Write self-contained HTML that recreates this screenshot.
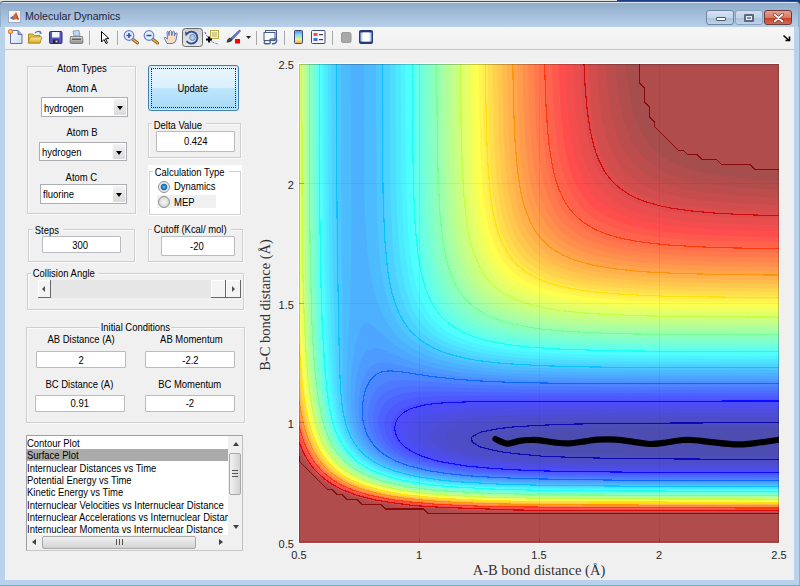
<!DOCTYPE html>
<html><head><meta charset="utf-8">
<style>
*{box-sizing:border-box;margin:0;padding:0}
html,body{width:800px;height:586px;overflow:hidden;background:#F0F0F0;font-family:"Liberation Sans",sans-serif;}
.a{position:absolute}
.t{position:absolute;font-size:9.6px;color:#000;white-space:nowrap;line-height:12px}
.fr{position:absolute;border:1px solid #CFCFCF;box-shadow:inset 1px 1px 0 #FAFAFA,1px 1px 0 #FAFAFA}
.lab{position:absolute;font-size:9.6px;background:#F0F0F0;padding:0 2px;white-space:nowrap;line-height:12px;color:#000}
.ed{position:absolute;background:#fff;border:1px solid #B9BBC1;border-radius:1px;font-size:9.6px;text-align:center;line-height:15px;color:#000}
.dd{position:absolute;background:#fff;border:1px solid #ABADB3;font-size:9.6px;line-height:17px;padding-left:3px}
.dd .btn{position:absolute;right:1px;top:1px;width:12px;bottom:1px;background:linear-gradient(#F2F2F2,#DADADA);}
.dd .btn:after{content:"";position:absolute;left:2.5px;top:7px;border-left:3.5px solid transparent;border-right:3.5px solid transparent;border-top:4px solid #000}
.sep{position:absolute;top:31px;width:1px;height:14px;background:#C5C5C5;box-shadow:1px 0 0 #FFF}
</style></head><body>
<!-- desktop/frame -->
<div class="a" style="left:0;top:0;width:800px;height:586px;background:#B9D1EA"></div>
<div class="a" style="left:0;top:0;width:617px;height:1px;background:#E2E2E2"></div>
<div class="a" style="left:617px;top:0;width:183px;height:1px;background:#1B3F8A"></div>
<div class="a" style="left:790px;top:0;width:10px;height:10px;background:#0F3C88"></div>
<div class="a" style="left:0;top:1px;width:800px;height:26px;background:#8FACCB;border-radius:4px 4px 0 0;border-top:1px solid #4C4C4C;"></div>
<div class="a" style="left:1px;top:2px;width:797px;height:25px;border-radius:3px 3px 0 0;background:linear-gradient(#DCE6F0 0px,#DCE6F0 1px,#8FACCB 1px,#A2BCD8 12px,#B8D0EA 25px)"></div>
<div class="a" style="left:799px;top:10px;width:1px;height:576px;background:#4FCFF0"></div>
<div class="a" style="left:0;top:585px;width:800px;height:1px;background:#2EC8EC"></div>
<!-- title -->
<div class="a" style="left:8px;top:10px;width:13px;height:13px;background:#F4F4F4;border:1px solid #9BB0C8">
<svg width="11" height="11" viewBox="0 0 11 11" style="position:absolute;left:0;top:0"><path d="M1 7 L4 5 L7 1 L10 9 L7 8 L5 9 Z" fill="#E8632A"/><path d="M1 7 L4 5 L5 9 Z" fill="#3A7BC8"/><path d="M7 1 L10 9 L8 8 Z" fill="#C23A1A"/></svg>
</div>
<div class="t" style="left:25px;top:9px;font-size:10.6px;line-height:14px;color:#1E1E3C">Molecular Dynamics</div>
<!-- caption buttons -->
<div class="a" style="left:706px;top:10px;width:28px;height:15px;border:1px solid #6F86A3;border-radius:3px;background:linear-gradient(#D6E3F2,#C2D5EA 50%,#A9C1DD 51%,#BCD2EA)"><div class="a" style="left:9px;top:6px;width:10px;height:4px;background:#fff;border:1px solid #4A5A70;border-radius:1px"></div></div>
<div class="a" style="left:735px;top:10px;width:28px;height:15px;border:1px solid #8CA2BC;border-radius:3px;background:linear-gradient(#D0DFF0,#C0D4EA 50%,#ADC5E0 51%,#BCD2EA)"><div class="a" style="left:8px;top:3px;width:10px;height:8px;background:#7A8FB0;border:2px solid #5E6A78;border-radius:1px;box-shadow:inset 0 0 0 1px #E8ECF2"></div></div>
<div class="a" style="left:764px;top:10px;width:28px;height:15px;border:1px solid #6E3A3A;border-radius:3px;background:linear-gradient(#E8A090,#D97A62 50%,#C23E22 51%,#D46A50)"><svg class="a" style="left:8px;top:2px" width="11" height="10" viewBox="0 0 11 10"><path d="M1.5 1.5 L9.5 8.5 M9.5 1.5 L1.5 8.5" stroke="#6A4040" stroke-width="3.2" stroke-linecap="round"/><path d="M1.5 1.5 L9.5 8.5 M9.5 1.5 L1.5 8.5" stroke="#F4F4F4" stroke-width="1.8" stroke-linecap="round"/></svg></div>
<!-- toolbar -->
<div class="a" style="left:5px;top:27px;width:789px;height:22px;background:linear-gradient(#F6F6F6,#F0F0F0)"></div>
<div class="a" style="left:5px;top:49px;width:789px;height:1px;background:#C6C6C6"></div>
<div class="a" style="left:5px;top:50px;width:789px;height:530px;background:#F0F0F0"></div>

<svg class="a" style="left:0;top:0" width="800" height="50" viewBox="0 0 800 50">
<defs>
<linearGradient id="gpage" x1="0" y1="0" x2="1" y2="1"><stop offset="0" stop-color="#FFFFFF"/><stop offset="1" stop-color="#C8DCF4"/></linearGradient>
<linearGradient id="gfold" x1="0" y1="0" x2="0" y2="1"><stop offset="0" stop-color="#FBE9A0"/><stop offset="1" stop-color="#D9A820"/></linearGradient>
<linearGradient id="gcb" x1="0" y1="0" x2="0" y2="1"><stop offset="0" stop-color="#6C7FE0"/><stop offset="0.35" stop-color="#7FE0F0"/><stop offset="0.7" stop-color="#F0F080"/><stop offset="1" stop-color="#F0A050"/></linearGradient>
<linearGradient id="gbtn" x1="0" y1="0" x2="0" y2="1"><stop offset="0" stop-color="#CFCFCF"/><stop offset="1" stop-color="#E9E9E9"/></linearGradient>
<linearGradient id="gprn" x1="0" y1="0" x2="0" y2="1"><stop offset="0" stop-color="#E0E0E0"/><stop offset="1" stop-color="#8A8A8A"/></linearGradient>
</defs>
<!-- new -->
<path d="M10.5 30.5 H18 L22 34.5 V43.5 H10.5 Z" fill="url(#gpage)" stroke="#5E6FA8" stroke-width="1"/>
<path d="M18 30.5 V34.5 H22" fill="#9AA8D8" stroke="#5E6FA8" stroke-width="1"/>
<circle cx="10.5" cy="31.5" r="2.6" fill="#F07030" opacity="0.9"/><circle cx="10.5" cy="31.5" r="1.2" fill="#FFE060"/>
<!-- open -->
<path d="M28.5 34 H33 L34.5 35.5 H40 V43 H28.5 Z" fill="#E8C040" stroke="#B08A20"/>
<path d="M28 43 L30.5 37 H42 L40 43 Z" fill="url(#gfold)" stroke="#B08A20" stroke-width="0.8"/>
<path d="M35 33 Q38 30 41 32.5" fill="none" stroke="#4A78B8" stroke-width="1.3"/><path d="M40 31 L42 33.5 L39.5 34 Z" fill="#4A78B8"/>
<!-- save -->
<rect x="49.5" y="31.5" width="12.5" height="12" rx="1" fill="#5656B8" stroke="#2E2E80"/>
<rect x="52" y="32" width="7.5" height="5.5" fill="#F4F4FF"/>
<rect x="53" y="39.5" width="5.5" height="4" fill="#202040"/><rect x="55.5" y="40.5" width="2" height="2" fill="#D0D0D0"/>
<!-- print -->
<path d="M73 31 L79 30.5 L80 36 L74 36 Z" fill="#B8D8F8" stroke="#8090A0" stroke-width="0.8"/>
<path d="M70.5 36.5 H82.5 L83 42 Q83 43.5 81.5 43.5 H71.5 Q70 43.5 70 42 Z" fill="url(#gprn)" stroke="#707070" stroke-width="0.8"/>
<rect x="72" y="38.5" width="9" height="1.5" fill="#606060"/>
<!-- separators -->
<rect x="89" y="31" width="1" height="14" fill="#A8A8A8"/>
<rect x="117" y="31" width="1" height="14" fill="#A8A8A8"/>
<!-- pointer -->
<path d="M101.5 31.5 V42 L104 39.5 L106 43.5 L107.5 42.8 L105.5 38.8 L108.8 38.5 Z" fill="#FFFFFF" stroke="#000" stroke-width="1" stroke-linejoin="round"/>
<!-- zoom in -->
<line x1="132.5" y1="39" x2="137.5" y2="43" stroke="#7A5A20" stroke-width="3" stroke-linecap="round"/>
<line x1="132.5" y1="39" x2="137.5" y2="43" stroke="#F0B050" stroke-width="1.6" stroke-linecap="round"/>
<circle cx="129" cy="35.5" r="4.8" fill="#E4F0FC" stroke="#6A80C8" stroke-width="1.2"/>
<path d="M126.5 35.5 H131.5 M129 33 V38" stroke="#3050B0" stroke-width="1.6"/>
<!-- zoom out -->
<line x1="152.5" y1="39" x2="157.5" y2="43" stroke="#7A5A20" stroke-width="3" stroke-linecap="round"/>
<line x1="152.5" y1="39" x2="157.5" y2="43" stroke="#F0B050" stroke-width="1.6" stroke-linecap="round"/>
<circle cx="149" cy="35.5" r="4.8" fill="#E4F0FC" stroke="#6A80C8" stroke-width="1.2"/>
<path d="M146.5 35.5 H151.5" stroke="#3050B0" stroke-width="1.6"/>
<!-- hand -->
<path d="M167 43.5 L164.5 38.5 Q164 37 165.5 37.5 L167.5 39 L167 32.5 Q167 31.2 168.2 31.5 L169 35.5 L169.5 31 Q170.5 30 171.3 31 L171.8 35.5 L172.8 31.5 Q173.8 30.8 174.5 31.8 L174.3 36 L175.8 33 Q177 32.5 177.2 33.8 L176 40 Q175 43.5 172 43.5 Z" fill="#F8DCC0" stroke="#5070C0" stroke-width="0.9" stroke-linejoin="round"/>
<!-- rotate pressed -->
<rect x="182.5" y="28.5" width="20" height="18" rx="3" fill="url(#gbtn)" stroke="#6A6A6A"/>
<path d="M187 33.5 A6 6 0 1 1 186.5 41" fill="none" stroke="#2A4E9A" stroke-width="1.8"/>
<path d="M185 31.5 L188.8 33.8 L185.6 36 Z" fill="#2A4E9A"/>
<ellipse cx="192.5" cy="37.5" rx="2.8" ry="3" fill="#B8C8E8" stroke="#5070B0" stroke-width="0.8"/>
<!-- data cursor -->
<rect x="210.5" y="30.5" width="8" height="8" fill="#F4F0B0" stroke="#B8B050"/>
<rect x="212" y="32" width="5" height="5" fill="#D8D090"/>
<path d="M205 32 Q207 37 210 40 Q213 43 218 44" fill="none" stroke="#5060E0" stroke-width="1" stroke-dasharray="2 1.2"/>
<path d="M206 39.5 H212 M209 36.5 V42.5" stroke="#000" stroke-width="1.8"/>
<!-- brush -->
<path d="M231 38 L239.5 30 L240.5 31 L232.5 39.5 Z" fill="#6A80D8" stroke="#3A4EA0" stroke-width="0.8"/>
<path d="M226.5 42.5 Q227 38.5 230 37.5 L232.5 39.8 Q231 43 226.5 42.5 Z" fill="#404040"/>
<rect x="235" y="39" width="5" height="4.5" fill="#FF0000"/>
<path d="M246 36 H251 L248.5 39 Z" fill="#202020"/>
<rect x="256" y="31" width="1" height="14" fill="#A8A8A8"/>
<!-- link -->
<rect x="265.5" y="30.5" width="11" height="8" fill="#F0F4FC" stroke="#4A5A88"/>
<rect x="264" y="32.5" width="11" height="8" fill="#F8FAFE" stroke="#4A5A88"/>
<path d="M265 41 Q263 43.5 266 43.8 H269 Q271 43.5 270 41 M270 41.5 Q269 39 272 39 H275 Q278 39.5 276 42.5 Q275 44 272 43.8" fill="none" stroke="#506090" stroke-width="1.4"/>
<rect x="284" y="31" width="1" height="14" fill="#A8A8A8"/>
<!-- colorbar -->
<rect x="294.5" y="30.5" width="8" height="13" rx="1" fill="url(#gcb)" stroke="#3A4A80"/>
<!-- legend -->
<rect x="311.5" y="30.5" width="13.5" height="13" rx="1" fill="#F8F8FF" stroke="#3A4A80"/>
<rect x="313.5" y="33" width="4" height="3" fill="#F05050"/><rect x="313.5" y="38" width="4" height="3" fill="#5060F0"/>
<rect x="319" y="34" width="4" height="1.2" fill="#404040"/><rect x="319" y="39" width="4" height="1.2" fill="#404040"/>
<rect x="332" y="31" width="1" height="14" fill="#A8A8A8"/>
<!-- hide tools -->
<rect x="341.5" y="32.5" width="9.5" height="10" rx="1.5" fill="#A8A8A8" stroke="#9A9A9A"/>
<!-- show tools -->
<rect x="359.5" y="30.5" width="13" height="13" rx="1" fill="#2A3A78" stroke="#2A3A78"/>
<rect x="360.5" y="32.5" width="11" height="9" fill="#B8D4F4"/>
<rect x="362.5" y="32.5" width="7" height="9" fill="#FFFFFF"/>
<!-- dock arrow -->
<path d="M783.5 35.5 L789 40.5 M785.5 40.5 H789.5 V36.5" stroke="#000" stroke-width="1.6" fill="none"/>
</svg>

<!-- left panel -->
<div class="fr" style="left:27px;top:66px;width:109px;height:148px"></div>
<div class="a" style="top:63.60px;left:53.00px;width:57.00px;height:10px;background:#F0F0F0"></div><div class="t" style="top:61.79px;font-size:11px;left:-68.50px;width:300px;text-align:center;"><span style="display:inline-block;transform:scaleX(0.86);transform-origin:center">Atom Types</span></div>
<div class="t" style="top:82.39px;font-size:11px;left:-67.90px;width:300px;text-align:center;"><span style="display:inline-block;transform:scaleX(0.86);transform-origin:center">Atom A</span></div>
<div class="dd" style="left:41px;top:97px;width:87px;height:20px"><div class="btn"></div></div><div class="t" style="top:101.99px;font-size:11px;left:43.50px;"><span style="display:inline-block;transform:scaleX(0.86);transform-origin:left">hydrogen</span></div>
<div class="t" style="top:126.19px;font-size:11px;left:-68.00px;width:300px;text-align:center;"><span style="display:inline-block;transform:scaleX(0.86);transform-origin:center">Atom B</span></div>
<div class="dd" style="left:39px;top:142px;width:88px;height:19px"><div class="btn"></div></div><div class="t" style="top:145.94px;font-size:11px;left:41.75px;"><span style="display:inline-block;transform:scaleX(0.86);transform-origin:left">hydrogen</span></div>
<div class="t" style="top:171.39px;font-size:11px;left:-68.25px;width:300px;text-align:center;"><span style="display:inline-block;transform:scaleX(0.86);transform-origin:center">Atom C</span></div>
<div class="dd" style="left:40px;top:184px;width:87px;height:20px"><div class="btn"></div></div><div class="t" style="top:187.94px;font-size:11px;left:43.25px;"><span style="display:inline-block;transform:scaleX(0.86);transform-origin:left">fluorine</span></div>
<div class="a" style="left:148px;top:65px;width:91px;height:46px;border:1px solid #3C7FB1;border-radius:3px;background:linear-gradient(#EAF6FD 0%,#D9F0FC 50%,#BEE6FD 50%,#A7D9F5 100%);box-shadow:inset 0 0 0 1px #CDEBFA"><div class="a" style="left:2px;top:2px;right:2px;bottom:2px;border:1px dotted #222"></div></div>
<div class="t" style="top:82.49px;font-size:11px;left:43.00px;width:300px;text-align:center;"><span style="display:inline-block;transform:scaleX(0.86);transform-origin:center">Update</span></div>
<div class="fr" style="left:148px;top:123px;width:93px;height:35px"></div>
<div class="t" style="top:118.69px;left:152.30px;font-size:11px"><span style="display:inline-block;transform:scaleX(0.86);transform-origin:left;background:#F0F0F0;padding:0 5px 0 2px">Delta Value</span></div>
<div class="ed" style="left:156px;top:131px;width:79px;height:21px"></div><div class="t" style="top:134.79px;font-size:11px;left:45.50px;width:300px;text-align:center;"><span style="display:inline-block;transform:scaleX(0.86);transform-origin:center">0.424</span></div>
<div class="a" style="left:148px;top:165px;width:94px;height:51px;background:#FFFFFF"></div>
<div class="a" style="left:149px;top:171px;width:92px;height:44px;border:1px solid #D0D0D0"></div>
<div class="t" style="top:165.59px;left:153.00px;font-size:11px"><span style="display:inline-block;transform:scaleX(0.86);transform-origin:left;background:#FFFFFF;padding:0 5px 0 2px">Calculation Type</span></div>
<div class="a" style="left:157px;top:195px;width:59px;height:13px;background:#F0F0F0"></div>
<div class="a" style="left:158px;top:181px;width:12px;height:12px;border-radius:50%;border:1px solid #8E8F8F;background:radial-gradient(circle at 50% 50%,#5FC0F0 0,#1F6FB0 2.5px,#2B6FA0 3.2px,#DDE 3.6px,#F4F4F4 5px)"></div>
<div class="a" style="left:158px;top:196px;width:12px;height:12px;border-radius:50%;border:1px solid #8E8F8F;background:radial-gradient(circle at 50% 50%,#F8F8F8 0,#E6E6E6 3px,#D6D6D6 5px)"></div>
<div class="t" style="top:180.09px;font-size:11px;left:173.70px;"><span style="display:inline-block;transform:scaleX(0.86);transform-origin:left">Dynamics</span></div>
<div class="t" style="top:195.89px;font-size:11px;left:173.70px;"><span style="display:inline-block;transform:scaleX(0.86);transform-origin:left">MEP</span></div>
<div class="fr" style="left:28px;top:229px;width:107px;height:33px"></div>
<div class="t" style="top:223.59px;left:32.50px;font-size:11px"><span style="display:inline-block;transform:scaleX(0.86);transform-origin:left;background:#F0F0F0;padding:0 5px 0 2px">Steps</span></div>
<div class="ed" style="left:42px;top:236px;width:79px;height:17px"></div><div class="t" style="top:238.94px;font-size:11px;left:-69.50px;width:300px;text-align:center;"><span style="display:inline-block;transform:scaleX(0.86);transform-origin:center">300</span></div>
<div class="fr" style="left:148px;top:229px;width:95px;height:33px"></div>
<div class="t" style="top:223.19px;left:152.25px;font-size:11px"><span style="display:inline-block;transform:scaleX(0.86);transform-origin:left;background:#F0F0F0;padding:0 5px 0 2px">Cutoff (Kcal/ mol)</span></div>
<div class="ed" style="left:161px;top:236px;width:74px;height:20px"></div><div class="t" style="top:240.39px;font-size:11px;left:47.00px;width:300px;text-align:center;"><span style="display:inline-block;transform:scaleX(0.86);transform-origin:center">-20</span></div>
<div class="fr" style="left:27px;top:273px;width:217px;height:37px"></div>
<div class="t" style="top:267.19px;left:31.20px;font-size:11px"><span style="display:inline-block;transform:scaleX(0.86);transform-origin:left;background:#F0F0F0;padding:0 5px 0 2px">Collision Angle</span></div>
<div class="a" style="left:38px;top:280px;width:203px;height:18px;background:#E6E6E6"></div>
<div class="a" style="left:38px;top:280px;width:13px;height:18px;background:#F4F4F4;border-right:1px solid #696969;border-bottom:1px solid #696969;box-shadow:inset 1px 1px 0 #FFF"></div>
<div class="a" style="left:211px;top:280px;width:15px;height:18px;background:#F4F4F4;border-right:1px solid #696969;border-bottom:1px solid #696969;box-shadow:inset 1px 1px 0 #FFF"></div>
<div class="a" style="left:226px;top:280px;width:15px;height:18px;background:#F4F4F4;border-right:1px solid #696969;border-bottom:1px solid #696969;box-shadow:inset 1px 1px 0 #FFF"></div>
<div class="a" style="left:42px;top:286px;border-top:3px solid transparent;border-bottom:3px solid transparent;border-right:3px solid #505050"></div>
<div class="a" style="left:232px;top:286px;border-top:3px solid transparent;border-bottom:3px solid transparent;border-left:3px solid #505050"></div>
<div class="fr" style="left:26px;top:327px;width:219px;height:96px"></div>
<div class="a" style="top:322.75px;left:99.00px;width:72.00px;height:10px;background:#F0F0F0"></div><div class="t" style="top:320.94px;font-size:11px;left:-15.00px;width:300px;text-align:center;"><span style="display:inline-block;transform:scaleX(0.86);transform-origin:center">Initial Conditions</span></div>
<div class="t" style="top:333.39px;font-size:11px;left:-69.10px;width:300px;text-align:center;"><span style="display:inline-block;transform:scaleX(0.86);transform-origin:center">AB Distance (A)</span></div>
<div class="ed" style="left:36px;top:351px;width:90px;height:17px"></div><div class="t" style="top:353.94px;font-size:11px;left:-69.00px;width:300px;text-align:center;"><span style="display:inline-block;transform:scaleX(0.86);transform-origin:center">2</span></div>
<div class="t" style="top:333.39px;font-size:11px;left:41.60px;width:300px;text-align:center;"><span style="display:inline-block;transform:scaleX(0.86);transform-origin:center">AB Momentum</span></div>
<div class="ed" style="left:145px;top:351px;width:90px;height:17px"></div><div class="t" style="top:353.94px;font-size:11px;left:40.00px;width:300px;text-align:center;"><span style="display:inline-block;transform:scaleX(0.86);transform-origin:center">-2.2</span></div>
<div class="t" style="top:377.89px;font-size:11px;left:-70.15px;width:300px;text-align:center;"><span style="display:inline-block;transform:scaleX(0.86);transform-origin:center">BC Distance (A)</span></div>
<div class="ed" style="left:35px;top:395px;width:90px;height:17px"></div><div class="t" style="top:396.94px;font-size:11px;left:-70.50px;width:300px;text-align:center;"><span style="display:inline-block;transform:scaleX(0.86);transform-origin:center">0.91</span></div>
<div class="t" style="top:377.89px;font-size:11px;left:39.75px;width:300px;text-align:center;"><span style="display:inline-block;transform:scaleX(0.86);transform-origin:center">BC Momentum</span></div>
<div class="ed" style="left:145px;top:395px;width:90px;height:17px"></div><div class="t" style="top:396.94px;font-size:11px;left:40.00px;width:300px;text-align:center;"><span style="display:inline-block;transform:scaleX(0.86);transform-origin:center">-2</span></div>
<div class="a" style="left:26px;top:435px;width:217px;height:116px;background:#fff;border:1px solid #A0A0A0;border-right-color:#C0C0C0;border-bottom-color:#C8C8C8"></div>
<div class="a" style="left:27px;top:449px;width:201px;height:12px;background:#ABABAB"></div>
<div class="a" style="left:27px;top:436px;width:201px;height:99px;overflow:hidden">
<div class="t" style="top:0.99px;font-size:11px;left:-0.50px;"><span style="display:inline-block;transform:scaleX(0.86);transform-origin:left">Contour Plot</span></div>
<div class="t" style="top:13.33px;font-size:11px;left:-0.50px;"><span style="display:inline-block;transform:scaleX(0.86);transform-origin:left">Surface Plot</span></div>
<div class="t" style="top:25.67px;font-size:11px;left:-0.50px;"><span style="display:inline-block;transform:scaleX(0.86);transform-origin:left">Internuclear Distances vs Time</span></div>
<div class="t" style="top:38.01px;font-size:11px;left:-0.50px;"><span style="display:inline-block;transform:scaleX(0.86);transform-origin:left">Potential Energy vs Time</span></div>
<div class="t" style="top:50.35px;font-size:11px;left:-0.50px;"><span style="display:inline-block;transform:scaleX(0.86);transform-origin:left">Kinetic Energy vs Time</span></div>
<div class="t" style="top:62.69px;font-size:11px;left:-0.50px;"><span style="display:inline-block;transform:scaleX(0.86);transform-origin:left">Internuclear Velocities vs Internuclear Distance</span></div>
<div class="t" style="top:75.03px;font-size:11px;left:-0.50px;"><span style="display:inline-block;transform:scaleX(0.86);transform-origin:left">Internuclear Accelerations vs Internuclear Distance</span></div>
<div class="t" style="top:87.37px;font-size:11px;left:-0.50px;"><span style="display:inline-block;transform:scaleX(0.86);transform-origin:left">Internuclear Momenta vs Internuclear Distance</span></div>
</div>
<div class="a" style="left:228px;top:436px;width:14px;height:99px;background:#F0F0F0"></div>
<div class="a" style="left:233px;top:442px;border-left:3px solid transparent;border-right:3px solid transparent;border-bottom:4px solid #404040"></div>
<div class="a" style="left:233px;top:525px;border-left:3px solid transparent;border-right:3px solid transparent;border-top:4px solid #404040"></div>
<div class="a" style="left:229px;top:453px;width:12px;height:42px;border:1px solid #A9A9A9;border-radius:2px;background:linear-gradient(90deg,#F2F2F2,#E2E2E2 50%,#D2D2D2)"></div>
<div class="a" style="left:232px;top:470px;width:6px;height:1px;background:#555;box-shadow:0 3px 0 #555,0 6px 0 #555"></div>
<div class="a" style="left:27px;top:535px;width:215px;height:15px;background:#F0F0F0"></div>
<div class="a" style="left:32px;top:539px;border-top:3px solid transparent;border-bottom:3px solid transparent;border-right:4px solid #404040"></div>
<div class="a" style="left:219px;top:539px;border-top:3px solid transparent;border-bottom:3px solid transparent;border-left:4px solid #404040"></div>
<div class="a" style="left:42px;top:536px;width:154px;height:13px;border:1px solid #A9A9A9;border-radius:2px;background:linear-gradient(#F2F2F2,#E2E2E2 50%,#D2D2D2)"></div>
<div class="a" style="left:116px;top:539px;width:1px;height:6px;background:#555;box-shadow:3px 0 0 #555,6px 0 0 #555"></div>
<!-- plot -->
<svg class="a" style="left:0;top:0" width="800" height="586" viewBox="0 0 800 586">
<defs><clipPath id="pc"><rect x="299" y="64" width="480" height="478.5"/></clipPath></defs>
<rect x="298" y="63" width="482" height="481" fill="#FFFFFF"/>
<g clip-path="url(#pc)">
<rect x="299" y="64" width="480" height="478.5" fill="#4D4DB1"/>
<path fill="#4D4DBC" d="M299 542.5 779 542.5 779 456.3 644.6 455.4 601.4 454.4 563 452.9 541.5 451.6 515 447.6 510.4 446.8 500.3 442 503.5 437.2 515 434.3 525.3 432.4 558.2 430.1 591.8 428.8 639.8 427.8 779 427.2 779 64 299 64 299 542.5Z"/>
<path fill="#4D4DC7" d="M299 542.5 779 542.5 779 460.1 620.6 459.2 572.6 458.1 534 456.4 495.8 452 481.4 448.5 475.5 446.8 467.8 442 467.1 437.2 474.1 432.4 491 428.4 510.2 426.1 534.2 424.6 567.8 423.3 611 422.5 779 421.8 779 64 299 64 299 542.5Z"/>
<path fill="#4D4DD2" d="M299 542.5 779 542.5 779 463.1 601.4 462.2 557 461.2 519.8 459 491.6 456.4 466.9 451.6 454 446.8 447.4 442 445.4 437.2 447.9 432.4 457.4 427.4 467 425 479 422.9 505.4 420.5 539 419 587 418.1 779 417.3 779 64 299 64 299 542.5Z"/>
<path fill="#4D4DDE" d="M299 542.5 779 542.5 779 465.8 668.6 465.5 596.6 464.8 543.8 463.3 503.9 461.2 486.2 459.1 467.3 456.4 449.1 451.6 438.6 446.8 432.6 442 430 437.2 430.6 432.4 434.7 427.7 444.8 422.9 462.2 419.1 486.2 416.6 519.8 415 572.6 414 779 413.2 779 64 299 64 299 542.5Z"/>
<path fill="#4D4DE9" d="M299 542.5 779 542.5 779 467.9 649.4 467.6 572.6 466.7 529.4 465.3 486.2 462.2 471.8 460.4 452.6 456.9 435.7 451.6 426.6 446.8 421.1 442 418.2 437.2 417.6 432.4 419.5 427.7 423.8 423.6 428.6 420.9 433.4 418.9 443 416.4 452.6 414.7 476.6 412.4 510.2 411 563 410.2 779 409.5 779 64 299 64 299 542.5Z"/>
<path fill="#4D4DF4" d="M299 542.5 779 542.5 779 470 659 469.7 582.2 468.9 524.6 467.3 499.3 465.9 486.2 464.7 467 462.5 452.6 460 437.4 456.4 424.9 451.6 416.8 446.8 411.6 442 408.6 437.2 407.4 432.4 408 427.7 410.7 422.9 414.2 419.8 419 416.8 428.4 413.3 433.4 412.2 447.8 409.9 462.2 408.6 495.8 407.3 543.8 406.6 779 406 779 64 299 64 299 542.5Z"/>
<path fill="#4D4DFF" d="M299 542.5 779 542.5 779 471.8 649.4 471.5 569.7 470.7 515 468.8 474.6 465.9 443.9 461.2 426.9 456.4 415.9 451.6 408.5 446.8 403.6 442 400.5 437.2 398.9 432.4 398.8 427.7 400.1 422.9 403.3 418.1 409.4 413.3 414.2 411.1 422 408.5 428.6 407.2 438.2 405.8 452.6 404.6 481.4 403.6 524.6 403.1 779 402.6 779 64 299 64 299 542.5Z"/>
<path fill="#4D58FF" d="M299 542.5 779 542.5 779 473.4 635 473 553.4 472 505.4 470.3 481.4 468.5 462.2 466.5 447.8 464.3 432.8 461.2 418 456.4 408.2 451.6 401.5 446.8 396.8 442 393.6 437.2 391.8 432.4 391.1 427.7 391.5 422.9 393.3 418.1 396.7 413.3 402.8 408.5 409.4 405.6 415.7 403.7 423.8 402.2 438.2 400.8 457.4 400 491 399.6 779 399.4 779 64 299 64 299 542.5Z"/>
<path fill="#4D63FF" d="M299 542.5 779 542.5 779 475 635 474.7 553.4 473.6 519.8 472.6 491 471.2 457.4 467.9 443 465.7 423.5 461.2 410.4 456.4 401.5 451.6 395 446.6 390.7 442 387.6 437.2 385.5 432.4 384.5 427.7 384.4 422.9 385.2 418.1 387.1 413.3 390.4 408.5 396.3 403.7 404.6 400.1 409.4 398.8 419 397.2 428.6 396.4 457.4 395.8 779 396.2 779 64 299 64 299 542.5Z"/>
<path fill="#4D6EFF" d="M299 542.5 779 542.5 779 476.4 635 476.1 558.2 475.3 500.6 473.3 476.6 471.7 457.4 469.8 433.4 465.9 419 462.2 403.8 456.4 395.6 451.6 389.6 446.8 385.3 442 382.2 437.2 380.1 432.4 378.8 427.7 378.3 422.9 378.5 418.1 379.5 413.3 381.3 408.5 385.4 402.6 389.6 398.9 395 396 399.8 394.3 404.6 393.2 414.2 392 433.4 391.4 553.4 393 779 393.2 779 64 299 64 299 542.5Z"/>
<path fill="#4D79FF" d="M299 542.5 779 542.5 779 477.8 625.4 477.4 543.8 476.4 495.8 474.6 471.8 472.9 450.8 470.7 428.6 466.8 414.2 463 408.6 461.2 399.8 457.3 390.2 451.6 384.6 446.8 380.4 442 377.4 437.2 375.2 432.4 373.8 427.7 372.8 418.1 374.1 408.5 375.8 403.7 380.6 396.3 385.4 392.2 390.2 389.7 395 388.1 404.6 386.6 419 386.3 486.2 388.8 543.8 389.8 779 390.2 779 64 299 64 299 542.5Z"/>
<path fill="#4D84FF" d="M299 542.5 779 542.5 779 479.1 625.4 478.7 539 477.6 485.5 475.5 462.2 473.5 439.4 470.7 416.7 465.9 404.6 461.9 392.6 456.4 385.4 451.6 380.1 446.8 376 442 371 432.9 368.3 422.9 367.7 413.3 369.1 403.7 370.5 398.9 372.7 394.2 375.8 389.4 380.6 385 385.4 382.5 390.2 381.1 395 380.3 409.4 380.2 467 384.4 524.6 386.3 606.2 387.1 779 387.2 779 64 299 64 299 542.5Z"/>
<path fill="#4D8FFF" d="M299 542.5 779 542.5 779 480.4 620.6 480 534.2 478.8 500.6 477.6 471.8 475.9 452.6 474 433.4 471.3 409.9 465.9 399.8 462.3 387.8 456.4 381 451.6 375.9 446.8 372 442 366.8 432.4 364 422.9 363 413.3 363.4 403.7 365.3 394.2 366.9 389.4 371 381.6 375.8 376.7 380.6 374 385.4 372.8 390.2 372.4 399.8 372.8 433.4 377.4 457.4 379.9 481.4 381.6 510.2 382.8 596.6 384.1 779 384.3 779 64 299 64 299 542.5Z"/>
<path fill="#4D9BFF" d="M299 542.5 779 542.5 779 481.5 620.6 481.1 534.2 480 500.6 478.8 471.8 477.2 452.6 475.5 428.6 472 414.2 468.8 399.8 464.4 392 461.2 385.4 457.5 377 451.6 372.1 446.8 368.3 442 365.4 437.2 363.1 432.4 360.2 422.9 359.3 418.1 358.6 408.5 358.9 398.9 360.3 389.4 361.4 384.1 364.8 375 366.2 372.1 371 366.2 375.8 363.4 380.6 362.4 390.2 363.1 420.5 370.2 443 374.2 467 377 500.6 379.1 539 380.4 587 381 779 381.4 779 64 299 64 299 542.5Z"/>
<path fill="#4DA6FF" d="M299 542.5 779 542.5 779 482.5 611 482.1 519.8 480.8 491 479.6 462.2 477.6 441.4 475.5 423.8 472.6 414.7 470.7 404.6 467.9 398.5 465.9 390.2 462.4 379.3 456.4 371 449.4 366.2 443.8 361.9 437.2 358 427.7 355.7 418.1 354.4 403.7 354.6 394.2 356.1 379.8 358 370.2 361.4 359.3 366.2 351.5 371 348.4 375.8 348 380.6 349.1 385.4 350.9 408.4 360.7 428.6 366.8 452.6 371.4 467 373.2 486.2 374.9 524.6 376.9 577.4 378 779 378.6 779 64 299 64 299 542.5Z"/>
<path fill="#4DB1FF" d="M299 542.5 779 542.5 779 483.6 611 483.2 519.8 481.9 481.4 480.3 462.2 478.9 433.4 475.7 419 473.1 408.4 470.7 399.8 468.1 393.6 465.9 385.4 462.2 375.5 456.4 369.7 451.6 365.2 446.8 361.6 442 358.8 437.2 356.5 432.4 353.4 422.9 351 408.5 350.4 394.2 351.8 368.1 356.6 338.6 361.4 325.5 366.2 322.3 371 324.2 384.7 336.7 396.6 346.3 404.2 351.1 413.5 355.9 425.8 360.7 438.2 364.2 452.6 367.3 467 369.5 486.2 371.5 505.4 372.9 558.2 374.7 635 375.5 779 375.7 779 64 299 64 299 542.5Z"/>
<path fill="#4DBCFF" d="M299 542.5 779 542.5 779 484.7 644.6 484.5 563 483.8 505.4 482.5 463.8 480.3 443 478.2 423.8 475.5 402.8 470.7 389.1 465.9 380.6 461.8 372.1 456.4 366.4 451.6 362.1 446.8 358.6 442 355.8 437.2 351.8 427.7 348.4 413.3 347.2 403.7 346.6 394.2 346.8 365.5 350.1 303.2 351.2 260.2 351.4 212.3 350.5 64 299 64 299 542.5ZM516.3 370.2 553.4 371.6 601.4 372.4 779 372.9 779 64 364.2 64 364.3 188.4 365.1 217.1 367.3 250.6 369.7 269.8 373.5 288.9 377.8 303.2 384.2 317.6 386.9 322.4 393.7 332 398.1 336.7 403.3 341.5 414.2 349.2 428 355.9 443 360.8 465.6 365.5 486.2 368 516.3 370.2Z"/>
<path fill="#4DC7FF" d="M299 542.5 779 542.5 779 485.7 563 484.9 505.4 483.5 462.2 481.2 443 479.4 423.8 476.7 414.2 474.9 399.8 471.3 385.4 466.1 380.6 463.8 375.7 461.2 366.2 454.1 361.4 449.4 356.6 443.2 353.1 437.2 350.8 432.4 346.4 418.1 344.8 408.5 343.4 394.2 342.6 370.2 342.5 308 341.3 183.6 340.9 64 299 64 299 542.5ZM495.1 365.5 534.2 368 582.2 369.3 654.2 369.9 779 370.1 779 64 376.1 64 376.4 178.8 377.1 212.3 378 236.3 379.9 260.2 382.4 279.3 386.8 298.5 390 308 392 312.8 397 322.4 404 332 408.5 336.7 414.1 341.5 423.8 347.9 430.1 351.1 438.2 354.4 452.6 358.8 471.8 362.6 495.1 365.5Z"/>
<path fill="#4DD2FF" d="M299 542.5 779 542.5 779 486.6 558.2 485.8 505.4 484.6 462.2 482.3 433.4 479.4 414.2 476.2 404.6 474 393 470.7 381 465.9 372.4 461.2 365.7 456.4 360.5 451.6 356.4 446.8 351.8 439.7 348.2 432.4 345 422.9 342.8 413.3 340.4 394.2 338.8 360.7 336.7 260.2 335.9 178.8 335.5 64 299 64 299 542.5ZM548.4 365.5 625.4 366.9 779 367.2 779 64 383.5 64 384.1 183.6 385 217.1 386.4 245.8 388.9 269.8 392.3 288.9 396.3 303.2 402.6 317.6 408.9 327.2 413 332 419 337.6 424.2 341.5 432.2 346.3 438.2 349.2 447.8 352.8 457.4 355.7 467 357.9 486.2 361 515 363.8 548.4 365.5Z"/>
<path fill="#4DDEFF" d="M299 542.5 779 542.5 779 487.5 639.8 487.3 558.2 486.7 500.6 485.4 462.2 483.3 431.3 480.3 404.6 475.4 388.7 470.7 377.5 465.9 369.2 461.2 362.8 456.4 357.8 451.6 353.8 446.8 350.6 442 345.8 432.4 342.5 422.9 340.3 413.3 338.7 403.7 337.1 389.4 334.9 346.3 332.6 261.1 331.8 178.8 331.4 64 299 64 299 542.5ZM516.7 360.7 553.4 362.6 601.4 363.7 779 364.4 779 64 389.8 64 390.4 178.8 391.2 212.3 392.3 236.3 394.3 260.2 397.1 279.3 400.4 293.7 405.4 308 409.4 316 413.4 322.4 417.1 327.2 421.6 332 427.2 336.7 433.4 341 443 346 456.7 351.1 471.8 354.9 491 358.1 516.7 360.7Z"/>
<path fill="#4DE9FF" d="M299 542.5 779 542.5 779 488.4 563 487.6 505.4 486.4 462.2 484.3 443 482.6 423.8 480.3 399.8 475.5 384.7 470.7 375.8 466.8 366.2 461.2 360.1 456.4 355.2 451.6 351.3 446.8 348.2 442 345.6 437.2 341.7 427.7 339 418.1 337 408.5 333.7 379.8 331.3 332 329.3 260.2 328.4 183.6 328 64 299 64 299 542.5ZM593.2 360.7 663.8 361.4 779 361.6 779 64 395.4 64 396.1 183.6 397.1 217.1 398.8 245.8 401.6 269.8 405.5 288.9 410.1 303.2 414.2 312 417.5 317.6 425.1 327.2 430.2 332 438.2 337.8 444.8 341.5 452.6 345 462.2 348.3 471.8 350.9 495.8 355.2 519.8 357.7 553.4 359.6 593.2 360.7Z"/>
<path fill="#4DF4FF" d="M299 542.5 779 542.5 779 489.3 639.8 489.1 558.2 488.5 500.6 487.2 458.3 485.1 438.2 483.1 419 480.6 395.1 475.5 381 470.7 371 466 363.4 461.2 357.5 456.4 352.8 451.6 347 443.8 343.4 437.2 339.5 427.7 336.7 418.1 334.8 408.5 332.6 394.2 331.2 379.8 328 322.4 326.5 269.8 325.6 188.4 325.2 64 299 64 299 542.5ZM540.5 355.9 577.4 357.4 620.6 358.2 779 358.7 779 64 400.5 64 401.2 174.1 402 207.6 403.5 236.3 405.8 260.2 409.1 279.3 412.9 293.7 418.8 308 424.6 317.6 428.4 322.4 433.4 327.5 438.8 332 446.2 336.7 457.4 342.1 471.8 346.8 491 350.9 515 354 540.5 355.9Z"/>
<path fill="#4DFFFF" d="M299 542.5 779 542.5 779 490.1 630.2 489.9 553.4 489.3 491 487.7 447.8 485.2 414.2 480.9 390.8 475.5 377.6 470.7 368 465.9 360.7 461.2 355 456.4 350.5 451.6 346.7 446.8 343.8 442 341.2 437.2 337.3 427.7 333.5 413.3 331.8 403.7 328.1 370.2 325.3 317.6 323.6 255.4 322.9 188.4 322.5 64 299 64 299 542.5ZM750.1 355.9 779 355.9 779 64 405.4 64 405.8 145.3 406.6 193.2 408.3 231.5 411.2 260.2 413.6 274.5 415.8 284.1 418.8 293.7 422.7 303.2 428.1 312.8 431.7 317.6 435.9 322.4 441.2 327.2 447.8 332 456.5 336.7 471.8 342.6 491 347.2 505.4 349.5 519.8 351.1 553.4 353.4 596.6 354.9 654.2 355.6 750.1 355.9Z"/>
<path fill="#58FFF4" d="M299 542.5 779 542.5 779 490.9 625.4 490.7 543.8 490 491 488.6 447.8 486 428.6 484 409.4 481.1 399.8 479 386.8 475.5 374.3 470.7 366.2 466.5 358.2 461.2 352.6 456.4 347 450 342.2 442.9 337.4 433.2 335.4 427.7 332.6 418.1 329.8 403.7 327.8 390 326.3 375 323.1 322.4 321.6 269.8 320.7 193.2 320.3 64 299 64 299 542.5ZM570 351.1 644.6 352.6 779 353 779 64 410.1 64 410.9 174.1 411.9 207.6 413.2 231.5 415.6 255.4 418.9 274.5 422.8 288.9 428.9 303.3 433.4 310.7 438.2 316.9 443 321.8 447.8 325.8 457.4 332 471.8 338.2 481.4 341.1 491 343.4 510.2 346.6 539 349.5 570 351.1Z"/>
<path fill="#63FFE9" d="M299 542.5 779 542.5 779 491.7 630.2 491.4 548.6 490.8 495.8 489.7 452.6 487.3 429 485.1 414.2 482.9 400.3 480.3 385.4 476.2 371.2 470.7 366.2 468.1 356.6 461.8 351.8 457.7 346.1 451.6 339.7 442 337.2 437.2 332.6 425 327.8 403.7 325.3 384.6 323.5 365.5 320.8 317.6 319.2 260.2 318.4 183.6 318.1 64 299 64 299 542.5ZM540 346.3 572.6 348.1 620.6 349.4 779 350.2 779 64 414.6 64 415.4 169.3 416.3 202.8 417.6 226.7 419.4 245.8 422.2 265 425.4 279.3 430.3 293.7 433.4 300.2 438.1 308 446.2 317.6 451.7 322.4 457.4 326.4 467 331.6 480.8 336.7 495.8 340.6 515 343.8 540 346.3Z"/>
<path fill="#6EFFDE" d="M299 542.5 779 542.5 779 492.4 553.4 491.7 491 490.3 452.6 488.2 419 484.7 399.8 481.2 390.2 478.8 379.6 475.5 368.4 470.7 359.9 465.9 351.8 459.7 347 455 340.6 446.8 337.4 441.3 333.4 432.4 330.2 422.9 327.8 413.5 324.5 394.2 322.8 379.8 320.5 351.1 318.8 317.6 317.8 288.9 316.6 207.6 316.2 64 299 64 299 542.5ZM615.7 346.3 678.2 347 779 347.3 779 64 419.1 64 420 174.1 421.1 207.6 423.1 236.3 426.3 260.2 430.7 279.3 436 293.7 438.4 298.5 443 305.7 447.8 311.7 452.6 316.5 462.2 323.7 468.4 327.2 476.6 330.8 486.2 334.1 495.8 336.7 519.8 340.9 543.8 343.3 577.4 345.2 615.7 346.3Z"/>
<path fill="#79FFD2" d="M299 542.5 779 542.5 779 493.2 553.4 492.4 495.8 491.2 452.6 489 415.5 485.1 391.6 480.3 376.4 475.5 366.2 471 357.5 465.9 351.2 461.2 346.2 456.4 342.1 451.6 337.4 444.6 332.6 434.9 329.9 427.7 327.2 418.1 322.7 394.2 320.1 370.2 318.3 346.3 316 288.9 314.8 207.6 314.3 64 299 64 299 542.5ZM565 341.5 596.6 342.8 639.8 343.7 779 344.3 779 64 423.4 64 424.3 169.3 425.4 202.8 426.9 226.7 428.9 245.8 432.2 265 436 279.3 441.8 293.7 447.8 303.4 451.5 308 457.4 314 462.2 317.8 469.3 322.4 481.4 328.1 495.8 332.7 515 336.6 539 339.6 565 341.5Z"/>
<path fill="#84FFC7" d="M299 542.5 779 542.5 779 493.9 553.4 493.2 495.8 492 452.2 489.9 433.4 488.1 414.2 485.7 399.8 483.1 387.7 480.3 373.3 475.5 363 470.7 355.2 465.9 349.1 461.2 342.2 454 337.4 447.5 332.6 438.8 329.9 432.4 326.8 422.9 324.4 413.3 320.5 389.4 318.2 368.7 316.6 346.3 314 279.3 313 202.8 312.6 64 299 64 299 542.5ZM544 336.7 577.4 339 620.6 340.4 683 341.1 779 341.4 779 64 427.7 64 428.4 159.7 429.4 193.2 430.7 217.1 432.4 236.3 435.1 255.4 438.3 269.8 443.1 284.1 447.8 293.7 450.7 298.5 457.4 306.8 462.2 311.4 467 315.2 476.6 321 491 327 505.4 331 524.6 334.5 544 336.7Z"/>
<path fill="#8FFFBC" d="M299 542.5 779 542.5 779 494.7 630.2 494.5 548.6 493.9 486.2 492.4 443 489.9 423.8 487.9 404.6 485.1 384 480.3 370.4 475.5 361.4 471.2 353 465.9 347 461.2 342.2 456.3 335.2 446.8 332.5 442 328.3 432.4 325.2 422.9 322.8 413.3 318.2 384.8 316 360.7 314.4 336.7 312.4 284.1 311.4 202.8 311 64 299 64 299 542.5ZM600.3 336.7 668.6 338 779 338.4 779 64 431.9 64 432.9 169.3 434.2 202.8 436 226.7 438.3 245.8 442.1 265 446.7 279.3 451 288.9 453.8 293.7 457.4 298.8 462.2 304.4 467 308.9 472.1 312.8 480 317.6 486.2 320.5 500.6 325.7 519.8 330 539 332.8 567.8 335.2 600.3 336.7Z"/>
<path fill="#9BFFB1" d="M299 542.5 779 542.5 779 495.4 548.6 494.6 486.2 493.1 443 490.7 423.8 488.7 404.6 485.9 395 484 380.6 480.3 367.6 475.5 358.1 470.7 350.8 465.9 345.1 461.2 337.4 452.6 333.5 446.8 328.6 437.2 326.7 432.4 323.6 422.9 321.3 413.3 318.6 398.9 316.7 384.6 313.1 341.5 310.8 279.3 309.8 198 309.4 64 299 64 299 542.5ZM567.8 332 601.4 333.6 639.8 334.6 779 335.4 779 64 436.1 64 437 159.7 438.1 193.2 439.6 217.1 441.6 236.3 444.8 255.4 448.6 269.8 454.4 284.1 460.1 293.7 463.8 298.5 468.3 303.2 473.9 308 481.1 312.8 491 317.8 505.4 322.8 524.6 327.1 543.8 329.8 567.8 332Z"/>
<path fill="#A6FFA6" d="M299 542.5 779 542.5 779 496 625.4 495.8 539 495.1 486.2 493.9 443 491.4 426.1 489.9 404.6 486.8 395 485 377.4 480.3 365 475.5 356.6 471.2 348.8 465.9 343.2 461.2 337.4 454.7 332.6 448 327.8 438.9 325.2 432.4 322.1 422.9 318.8 408.5 314.6 379.8 312.9 360.7 311.3 336.7 309.2 274.5 308.3 202.8 307.9 64 299 64 299 542.5ZM678.9 332 779 332.4 779 64 440.3 64 440.7 131 441.7 174.1 443.3 207.6 445.6 231.5 448.7 250.6 450.9 260.2 453.8 269.8 457.4 278.6 460.2 284.1 466.6 293.7 470.8 298.5 476 303.2 482.5 308 491 312.8 495.8 314.9 505.4 318.5 515 321.2 534.2 324.9 558.2 327.8 587 329.8 625.4 331.1 678.9 332Z"/>
<path fill="#B1FF9B" d="M299 542.5 779 542.5 779 496.6 625.4 496.4 543.8 495.9 487.4 494.7 443 492.1 419.4 489.9 404.6 487.6 391.4 485.1 375.8 480.8 362.5 475.5 356.6 472.4 347 466.1 342.2 461.9 337 456.4 332.6 450.4 327.7 442 323.7 432.4 320.7 422.9 318.2 412.9 315.7 398.9 313.4 382 309.9 336.7 308 284.1 306.9 202.8 306.6 64 299 64 299 542.5ZM601.5 327.2 668.6 328.7 779 329.3 779 64 444.5 64 445.5 159.7 446.8 193.2 448.5 217.1 450.9 236.3 454.7 255.4 459.2 269.8 462.2 276.7 466.2 284.1 473.4 293.7 478.2 298.5 484.3 303.2 495.8 310 510.2 315.5 529.4 320.3 548.6 323.3 572.6 325.5 601.5 327.2Z"/>
<path fill="#BCFF8F" d="M299 542.5 779 542.5 779 497.3 625.4 497.1 543.8 496.5 481.4 495.1 443 492.9 409.4 489.2 390.2 485.7 380.6 483.1 371.4 480.3 360.1 475.5 351.6 470.7 342.2 463.5 337.4 458.7 331.8 451.6 326.3 442 322.3 432.4 318.2 418.9 316 408.5 313.6 394.2 311.8 379.8 308.6 339.4 306.5 279.3 305.6 198 305.2 64 299 64 299 542.5ZM576.3 322.4 606.2 324.1 649.4 325.3 779 326.1 779 64 448.6 64 449.6 154.9 450.6 183.6 452.2 207.6 454.2 226.7 457.4 245.8 461.1 260.2 466.9 274.5 472.5 284.1 476.2 288.9 481.4 294.4 491 301.8 502.6 308 515.7 312.8 534.2 317.3 553.4 320.2 576.3 322.4Z"/>
<path fill="#C7FF84" d="M299 542.5 779 542.5 779 497.9 548.6 497.2 491 496 447.8 494 428.6 492.3 409.4 490 384.1 485.1 368.7 480.3 357.8 475.5 349.6 470.7 342.2 465.1 337.4 460.6 330.3 451.6 324.9 442 320.9 432.4 317.9 422.9 314.7 408.5 313 398.9 310.5 379.8 308.6 359.6 307.2 336.7 305.2 279.3 304.2 198 303.9 64 299 64 299 542.5ZM672.9 322.4 779 323 779 64 452.8 64 453.3 121.4 454.2 164.5 455.9 198 458.2 221.9 461.2 241 463.5 250.6 466.4 260.2 470.3 269.8 472.8 274.5 476.6 280.7 481.4 286.8 486.2 291.7 491 295.7 495.8 299 503.4 303.2 510.2 306.2 519.8 309.6 539 314.2 563 317.6 591.8 320 625.4 321.4 672.9 322.4Z"/>
<path fill="#D2FF79" d="M299 542.5 779 542.5 779 498.6 548.6 497.9 491 496.7 446.8 494.7 423.8 492.5 404.6 490.1 380.7 485.1 366.2 480.3 356.6 476 347.6 470.7 341.4 465.9 336.3 461.2 328.8 451.6 323.4 442 319.6 432.4 316.6 422.9 313.3 408.5 311 394.2 308.7 375 305.7 332 303.8 274.8 303 198 302.7 64 299 64 299 542.5ZM613 317.6 678.2 319.2 779 319.7 779 64 457 64 458.2 154.9 459.7 188.4 461.6 212.3 464.3 231.5 468.6 250.6 473.8 265 478.9 274.5 486.2 284.2 490.9 288.9 495.8 292.9 505.4 298.9 519.8 305 529.4 307.9 539 310.1 558.2 313.3 582.2 315.8 613 317.6Z"/>
<path fill="#DEFF6E" d="M299 542.5 779 542.5 779 499.2 625.4 499 543.8 498.4 481.4 497 438.2 494.7 419 492.7 399.8 490 377.7 485.1 363.7 480.3 353.5 475.5 345.8 470.7 339.7 465.9 332.6 458.7 327.3 451.6 322.1 442 318.2 432.4 313 413.3 310.5 398.9 308 379.8 305.9 355.9 304.4 332 302.7 279.3 301.9 202.8 301.6 64 299 64 299 542.5ZM590.3 312.8 620.6 314.5 659 315.5 779 316.5 779 64 461.3 64 462.4 150.1 463.6 178.8 465.3 202.8 467.5 221.9 471.2 241 475.5 255.4 479.7 265 485.3 274.5 489.1 279.3 493.6 284.1 499.1 288.9 505.4 293.2 515.6 298.5 529.4 303.4 548.6 307.9 567.8 310.7 590.3 312.8Z"/>
<path fill="#E9FF63" d="M299 542.5 779 542.5 779 499.8 625.4 499.6 543.8 499.1 481.4 497.6 438.2 495.3 419 493.4 399.8 490.7 390.2 488.9 374.7 485.1 361.2 480.3 351.8 475.7 344 470.7 338 465.9 332.6 460.4 326 451.6 320.8 442 317 432.4 313.4 420.2 310.9 408.5 308.5 394.2 306.3 375 303.7 341.5 301.8 288.9 300.7 207.6 300.4 64 299 64 299 542.5ZM708.2 312.8 779 313.1 779 64 465.6 64 466.1 121.4 467.1 159.7 469 193.2 471.6 217.1 475.1 236.3 477.7 245.8 481.1 255.4 485.7 265 488.7 269.8 496.4 279.3 501.6 284.1 508.2 288.9 519.8 295.1 529.4 298.7 539 301.5 558.2 305.5 582.2 308.5 615.8 310.7 654.2 312 708.2 312.8Z"/>
<path fill="#F4FF58" d="M299 542.5 779 542.5 779 500.4 620.6 500.2 534.2 499.6 481.4 498.3 438.2 495.9 419 494.2 399.8 491.5 390.2 489.8 371.9 485.1 359 480.3 351.8 476.7 342.2 470.7 336.4 465.9 331.7 461.2 324.6 451.6 319.5 442 315.8 432.4 312.9 422.9 308.8 403.7 304.7 370.2 301.9 327.2 300.4 274.5 299.6 207.6 299 64 299 542.5ZM636.5 308 692.6 309.2 779 309.7 779 64 469.9 64 471.2 150.1 472.5 178.8 474.5 202.8 477.2 221.9 481.4 240.3 486.2 253.8 492.1 265 495.8 270.3 500.6 275.8 505.4 280.2 510.4 284.1 518.4 288.9 524.6 291.9 539 297 558.2 301.3 577.4 304.1 606.2 306.6 636.5 308Z"/>
<path fill="#FFFF4D" d="M299 542.5 779 542.5 779 500.9 563 500.4 505.4 499.6 467 498.3 428.6 495.8 417.1 494.7 399.8 492.2 387.1 489.9 375.8 487 369.2 485.1 356.6 480.2 347.6 475.5 340.6 470.7 334.9 465.9 327.8 458.1 323.3 451.6 318.3 442 314.6 432.4 311.8 422.9 308.6 408.9 307 398.9 303.1 365.5 300.4 317.6 299 261.5 299 542.5ZM612.2 303.2 639.8 304.5 673.4 305.4 779 306.3 779 64 474.3 64 475.5 145.3 476.8 174.1 478.8 198 481.4 217.4 485.6 236.3 490.7 250.6 495.6 260.2 502.6 269.8 507.2 274.5 513 279.3 520.3 284.1 534.2 290.5 548.6 294.9 565.9 298.5 587 301.2 612.2 303.2Z"/>
<path fill="#FFF44D" d="M299 542.5 779 542.5 779 501.5 567.8 501 510.2 500.3 471.8 499.2 438.2 497.2 409.4 494.3 383.7 489.9 371 486.4 361.4 483.1 354.7 480.3 345.8 475.5 338.9 470.7 332.6 465.1 327.8 459.8 322 451.6 317.1 442 313.4 432.5 308.4 413.3 303.8 383.7 301 351.1 299 308.9 299 542.5ZM599.4 298.5 630.2 300.4 663.8 301.6 779 302.8 779 64 478.7 64 479.9 140.6 481.2 169.3 482.6 188.4 484.8 207.6 488.5 226.7 492.7 241 496.8 250.6 502.4 260.2 510.4 269.8 519.8 277.5 531.7 284.1 544.2 288.9 563 293.6 582.2 296.6 599.4 298.5Z"/>
<path fill="#FFE94D" d="M299 542.5 779 542.5 779 502.1 567.8 501.6 510.2 500.8 467 499.6 433.4 497.4 406.6 494.7 380.6 489.9 364.2 485.1 352.7 480.3 344.1 475.5 337.3 470.7 332.6 466.6 327.5 461.2 323.9 456.4 318.2 446.9 315.9 442 312.3 432.4 309.5 422.9 304.8 398.9 301.5 370.2 299 334.8 299 542.5ZM689.8 298.5 779 299.2 779 64 483.2 64 483.8 111.9 484.9 150.1 486.6 178.8 489.2 202.8 492.7 221.9 496.8 236.3 500.6 245.6 503.2 250.6 510.2 261 515 266.3 519.8 270.5 525.3 274.5 533.7 279.3 545.2 284.1 563 289.1 587 293.1 611 295.4 644.6 297.3 689.8 298.5Z"/>
<path fill="#FFDE4D" d="M299 542.5 779 542.5 779 502.6 572.6 502.2 515 501.5 471.8 500.3 438.2 498.4 404.6 495 380.6 490.6 366.2 486.5 350.8 480.3 342.4 475.5 335.8 470.7 330.6 465.9 326.2 461.2 322.6 456.4 317 446.8 312.8 437.2 309.7 427.7 305.3 408.5 301.9 384.6 299 352.6 299 542.5ZM650.5 293.7 702.2 294.9 779 295.5 779 64 487.8 64 488.4 111.9 489.4 145.3 491 174.1 493.6 198 497 217.1 501 231.5 507.2 245.8 513.3 255.4 519.8 262.8 529.4 270.5 536.1 274.5 543.8 278.2 558.2 283.1 577.4 287.3 596.6 290 620.6 292.1 650.5 293.7Z"/>
<path fill="#FFD24D" d="M299 542.5 779 542.5 779 503.2 577.4 502.8 524.6 502.2 481.4 501.2 443 499.4 419 497.3 397.7 494.7 374.6 489.9 356.6 483.8 348.9 480.3 340.8 475.5 334.3 470.7 329.2 465.9 323 458.6 318.3 451.6 313.6 442 311.8 437.2 308.6 427.7 306.3 418.1 302.7 398.9 299 366.1 299 542.5ZM633.2 288.9 687.8 290.8 779 291.7 779 64 492.5 64 494 140.6 495.6 169.3 497.5 188.4 500.4 207.6 503.8 221.9 509 236.3 513.9 245.8 521 255.4 529.4 263.4 539 269.8 553.4 276.3 567.8 280.6 587 284.4 606.2 286.8 633.2 288.9Z"/>
<path fill="#FFC74D" d="M299 542.5 779 542.5 779 503.7 577.4 503.3 524.6 502.8 481.4 501.7 443 500 419 498 393.7 494.7 371.9 489.9 356.6 484.7 347.1 480.3 339.2 475.5 332.9 470.7 327.8 466 320.2 456.4 313.4 444 307.6 427.7 303.3 408.5 299 376.9 299 542.5ZM623.9 284.1 649.4 285.6 683 286.8 779 287.9 779 64 497.2 64 498.7 135.8 500.3 164.5 502.1 183.6 505 202.8 508.3 217.1 513.3 231.5 518.1 241 524.9 250.6 529.4 255.4 534.2 259.6 543.8 266 553.4 270.6 567.8 275.5 582.2 278.9 601.4 281.9 623.9 284.1Z"/>
<path fill="#FFBC4D" d="M299 542.5 779 542.5 779 504.3 582.2 503.9 486.2 502.4 452.6 501.1 423.8 499.1 395 495.5 375.8 491.5 369.3 489.9 356.6 485.5 345.4 480.3 337.6 475.5 331.5 470.7 326.5 465.9 322.4 461.2 318.2 455.1 313.6 446.8 308 432.4 303.2 413.3 299 385.9 299 542.5ZM618.8 279.3 644.6 281.2 678.2 282.6 779 283.9 779 64 502.1 64 503.6 135.8 505 159.7 506.8 178.8 509.6 198 512.9 212.3 517.8 226.7 522.5 236.3 529 245.8 534.2 251.4 543.8 259.1 554.3 265 567.8 270.2 582.2 274 601.4 277.3 618.8 279.3Z"/>
<path fill="#FFB14D" d="M299 542.5 779 542.5 779 504.8 582.2 504.4 491 503.1 452.6 501.6 423.8 499.7 399.8 496.8 380.6 493.4 366.8 489.9 361.4 488 353.5 485.1 343.7 480.3 332.6 472.8 327.8 468.5 323 463.3 318.2 456.9 315 451.6 308.6 437.2 303.2 418.1 299 393.5 299 542.5ZM717.7 279.3 779 279.9 779 64 507 64 507.7 107.1 509 140.6 510.7 164.5 513.6 188.4 517.6 207.6 522.4 221.9 524.6 226.9 529.4 235.5 533.4 241 537.6 245.8 542.7 250.6 548.6 255 558.2 260.4 572.6 266.1 591.8 270.9 615.8 274.5 639.8 276.6 673.4 278.2 717.7 279.3Z"/>
<path fill="#FFA64D" d="M299 542.5 779 542.5 779 505.2 587 504.9 495.8 503.8 457.4 502.4 428.6 500.6 404.6 498.1 383.3 494.7 364.5 489.9 351.5 485.1 342 480.3 334.7 475.5 328.8 470.7 324 465.9 318.2 458.6 313.9 451.6 308.6 439.9 303.4 422.9 299 400 299 542.5ZM692 274.5 779 275.7 779 64 512.1 64 512.8 102.3 514 135.8 515.6 159.7 518.5 183.6 522.5 202.8 527.2 217.1 531.7 226.7 534.5 231.5 539 237.6 547 245.8 553.3 250.6 558.2 253.6 563 256.2 572.5 260.2 588.7 265 606.2 268.3 630.2 271.3 659 273.3 692 274.5Z"/>
<path fill="#FF9B4D" d="M299 542.5 779 542.5 779 505.7 587 505.4 490.6 504.2 452.6 502.7 423.8 500.7 404.6 498.7 380.2 494.7 362.2 489.9 347 483.8 340.4 480.3 333.2 475.5 327.5 470.7 322.8 465.9 315.7 456.4 312.9 451.6 308.4 442 303.7 427.7 299 405.8 299 542.5ZM681 269.8 721.4 270.8 779 271.4 779 64 517.3 64 518 102.3 519.4 135.8 521.2 159.7 523.6 178.8 527.5 198 532.2 212.3 536.6 221.9 539.4 226.7 543.8 232.9 551.6 241 557.7 245.8 563 249.1 576.3 255.4 591.7 260.2 611 264 630.2 266.5 654.2 268.4 681 269.8Z"/>
<path fill="#FF8F4D" d="M299 542.5 779 542.5 779 506.2 582.2 505.9 486.2 504.6 452.6 503.3 423.8 501.3 404.6 499.3 380.6 495.3 361.4 490.3 347 484.6 338.9 480.3 332.6 476.1 323 467.4 318.2 461.7 314.6 456.4 308.6 444.8 303.8 431.4 299 410.9 299 542.5ZM676.8 265 721.4 266.3 779 267 779 64 522.7 64 523.5 102.3 524.7 131 526.5 154.9 528.9 174.1 531.6 188.4 535.6 202.8 539 211.6 541.7 217.1 547.7 226.7 551.7 231.5 556.5 236.3 562.5 241 567.8 244.4 580.7 250.6 591.8 254.4 606.2 257.8 625.4 260.9 649.4 263.3 676.8 265Z"/>
<path fill="#FF844D" d="M299 542.5 779 542.5 779 506.7 587 506.4 491 505.2 461 504.2 428.6 502.2 401.2 499.4 385.4 496.9 374.5 494.7 366.2 492.4 357.9 489.9 347 485.5 337.3 480.3 330.5 475.5 325 470.7 316.7 461.2 313.4 456.2 308.6 447.1 303.2 432.4 299 415.5 299 542.5ZM676.9 260.2 721.4 261.7 779 262.4 779 64 528.2 64 528.9 97.5 530.1 126.2 531.9 150.1 534.3 169.3 537 183.6 541 198 543.8 205.5 547 212.3 553 221.9 556.9 226.7 561.7 231.5 567.6 236.3 572.6 239.5 585.5 245.8 596.6 249.6 611 253.1 630.2 256.3 649.4 258.3 676.9 260.2Z"/>
<path fill="#FF794D" d="M299 542.5 779 542.5 779 507.2 587 506.9 491 505.7 452.6 504.3 428.6 502.7 404.6 500.4 385.4 497.5 366.2 493.1 355.9 489.9 347 486.2 335.9 480.3 329.2 475.5 323.8 470.7 315.6 461.2 312.5 456.4 308.6 449.1 303.8 437.2 299 419.6 299 542.5ZM680.6 255.4 721.4 256.8 779 257.7 779 64 533.8 64 535.7 121.4 537.5 145.3 539.9 164.5 542.6 178.8 546.5 193.2 552.6 207.6 558.5 217.1 562.4 221.9 567.2 226.7 572.6 231.1 577.4 234.3 587 239.4 601.4 244.7 615.8 248.3 635 251.5 654.2 253.6 680.6 255.4Z"/>
<path fill="#FF6E4D" d="M299 542.5 779 542.5 779 507.6 591.8 507.4 495.8 506.3 438.2 504 414.2 502 390.2 498.9 369.3 494.7 353.9 489.9 342.2 484.7 334.5 480.3 327.9 475.5 322.6 470.7 318.2 465.9 313.4 459.4 308.8 451.6 303.8 439.8 299 423.4 299 542.5ZM687.6 250.6 726.2 252 779 252.8 779 64 539.7 64 540.6 97.5 542.1 126.2 543.8 145.3 546.5 164.5 549.5 178.8 554.1 193.2 558.4 202.8 564.4 212.3 572.6 221.5 582.2 228.8 591.8 234.1 606.2 239.5 620.6 243.2 639.8 246.5 663.8 249.1 687.6 250.6Z"/>
<path fill="#FF634D" d="M299 542.5 779 542.5 779 508.1 591.8 507.8 495.8 506.7 462.2 505.7 433.7 504.2 409.4 502 389.7 499.4 366.9 494.7 352 489.9 342.2 485.5 337.4 482.9 326.7 475.5 321.5 470.7 317.2 465.9 310.5 456.4 307.9 451.6 303.8 442.2 299 426.9 299 542.5ZM698.6 245.8 735.8 247 779 247.7 779 64 545.8 64 546.8 97.5 548.1 121.4 549.8 140.6 552.5 159.7 555.6 174.1 560.2 188.4 564.6 198 567.8 203.5 572.6 210.1 577.4 215.3 582.2 219.5 591.8 226 603.5 231.5 615.8 235.6 630.2 238.9 649.4 242 673.4 244.3 698.6 245.8Z"/>
<path fill="#FF584D" d="M299 542.5 779 542.5 779 508.6 591.8 508.3 495.8 507.2 457.4 506 428.6 504.3 404.6 502 386.3 499.4 364.6 494.7 350.2 489.9 337.4 483.7 331.8 480.3 325.5 475.5 320.3 470.7 316.1 465.9 309.6 456.4 303.8 444.5 299 430 299 542.5ZM715.3 241 779 242.4 779 64 552.1 64 553.2 97.5 554.7 121.4 556.7 140.6 559.7 159.7 563.3 174.1 568.6 188.4 573.8 198 581.2 207.6 586.1 212.3 591.8 216.8 600.2 221.9 611 226.8 626.3 231.5 644.6 235.2 663.8 237.7 687.8 239.7 715.3 241Z"/>
<path fill="#FF4D4D" d="M299 542.5 779 542.5 779 509.1 587 508.8 495.8 507.7 457.4 506.4 423.8 504.5 404.6 502.5 385.4 499.8 366.2 495.7 351.8 491.1 338.3 485.1 327.8 478.3 319.2 470.7 311.6 461.2 308.6 456.4 303.9 446.8 299 433 299 542.5ZM742.7 236.3 779 236.9 779 64 558.7 64 560 97.5 561.6 121.4 563.8 140.6 567.3 159.7 571.5 174.1 577.4 187.7 584.1 198 591.8 206.2 599.7 212.3 611 218.6 625.4 224 639.8 227.6 659 230.9 683 233.4 711.8 235.2 742.7 236.3Z"/>
<path fill="#F44D4D" d="M299 542.5 779 542.5 779 509.6 596.6 509.3 500.6 508.3 462.2 507.1 433.4 505.6 414.2 504.1 390.2 501.1 375.8 498.5 356.6 493.5 342.2 487.8 336.8 485.1 329.2 480.3 323.1 475.5 318.2 470.8 310.6 461.2 303.8 448.6 299 435.7 299 542.5ZM678 226.7 697.4 228.3 721.4 229.6 779 231.2 779 64 565.6 64 566.5 87.9 568 111.9 570 131 572.2 145.3 575.5 159.7 578.5 169.3 582.5 178.8 588 188.4 595.8 198 601.4 203 611 209.5 620.6 214.2 630.2 217.7 644.6 221.6 659 224.2 678 226.7Z"/>
<path fill="#E94D4D" d="M299 542.5 779 542.5 779 510.1 587 509.9 500.6 508.7 462.2 507.6 423.8 505.5 414.2 504.7 390.2 501.6 375.8 499.1 356.6 494.1 342.2 488.5 335.4 485.1 327.9 480.3 322 475.5 317.1 470.7 309.7 461.2 303.8 450.5 299 438.3 299 542.5ZM697.7 221.9 731 223.8 779 225.1 779 64 572.7 64 575.1 107.1 577.1 126.2 579.5 140.6 582.2 152.7 585.9 164.5 590.1 174.1 596.6 184.8 604 193.2 611 199.1 620.6 205 630.2 209.3 644.6 213.9 659 217.1 678.2 220 697.7 221.9Z"/>
<path fill="#DE4D4D" d="M299 542.5 779 542.5 779 510.7 596.6 510.5 515 509.7 443 507.1 414.2 505.3 395 502.8 375.8 499.8 356.6 494.8 343.5 489.9 332.6 484.2 326.7 480.3 320.9 475.5 312.1 465.9 308.6 461 303.8 452.4 299 440.7 299 542.5ZM727.5 217.1 779 218.8 779 64 580.3 64 581.5 87.9 583 107.1 585.4 126.2 588.1 140.6 591.8 154.2 595.8 164.5 601.4 174.9 608.1 183.6 615.8 190.9 625.4 197.4 636.7 202.8 649.4 207 663.8 210.4 683 213.4 702.2 215.4 727.5 217.1Z"/>
<path fill="#D24D4D" d="M299 542.5 779 542.5 779 511.2 596.6 511 515 510.4 452.6 508.1 414.2 505.9 404.6 504.9 375.8 500.5 356.6 495.6 342.2 490 332.7 485.1 323 478.3 318.2 474 313.4 468.8 308.6 462.4 305 456.4 299 443 299 542.5ZM696 207.6 731 210.3 779 212.1 779 64 588.2 64 590.9 102.3 592.6 116.6 595.1 131 597.4 140.6 601.4 152.9 606.2 163.4 611 171.1 615.8 177.1 622.6 183.6 630.2 189.1 639.8 194.3 649.4 198.1 663.8 202.2 678.2 205.1 696 207.6Z"/>
<path fill="#C74D4D" d="M299 542.5 779 542.5 779 511.7 591.8 511.6 510.2 511 476.6 510 404.6 505.7 397.3 504.2 375.8 501.3 356.6 496.4 342.2 491 332.6 486 323 479.2 318.7 475.5 313.4 470 308.6 463.7 304.1 456.4 299 445.1 299 542.5ZM728 202.8 779 205 779 64 596.6 64 598.3 87.9 600.3 107.1 602.7 121.4 606.1 135.8 609.2 145.3 613.5 154.9 619.3 164.5 625.4 171.8 633.4 178.8 640.6 183.6 650.3 188.4 663.8 193.2 678.2 196.7 692.6 199.2 707 200.9 728 202.8Z"/>
<path fill="#BC4D4D" d="M299 542.5 779 542.5 779 512.2 582.2 512.1 500.6 511.6 467 510.5 451.7 509 409.4 506.9 399.8 505.9 393.6 504.2 371 501.1 367.2 499.4 356.6 497.1 351.8 495.5 347 493.3 342.2 491.9 339 489.9 332.6 487 318.2 476.3 312.9 470.7 303 456.4 299 447.1 299 542.5ZM711.4 193.2 740.6 195.7 779 197.4 779 64 605.6 64 608.6 97.5 610.8 111.9 614 126.2 617 135.8 620.9 145.3 625.4 153.5 630.2 160.3 635 165.5 644.6 173.4 653.9 178.8 659 181.1 668.6 184.7 682.2 188.4 697.4 191.3 711.4 193.2Z"/>
<path fill="#B14D4D" d="M299 542.5 779 542.5 779 512.7 491 512.2 462.2 511.4 452.6 510.7 442.8 509 399.8 506.9 395 506.2 390.1 504.2 371 502.1 366.2 500.5 364.9 499.4 351.8 496.8 348.9 494.7 342.2 492.8 337.5 489.9 332.6 487.9 327.8 484.4 323 481.7 318.2 477.6 311.4 470.7 308 465.9 303.8 458.8 301.6 456.4 299 449 299 542.5ZM757.8 188.4 779 189.3 779 64 615.2 64 616.9 83.1 619.6 102.3 622.6 116.6 625.4 126.1 629.2 135.8 634.2 145.3 639.8 153.1 646.1 159.7 654.2 166 663.8 171.4 673.4 175.4 684.1 178.8 697.4 181.9 716.6 184.9 735.8 186.9 757.8 188.4Z"/>
<path fill="#A64D4D" d="M299 542.5 779 542.5 779 513.3 471.8 512.8 447.8 511.9 438.2 510.4 435.1 509 428.6 508.6 404.6 508.2 395 507.6 390.2 506.7 386.8 504.2 371 503.2 366.2 502.4 362.8 499.4 351.8 498.1 347.2 494.7 342.2 493.7 337.4 492.2 335.1 489.9 332.6 488.9 327.2 485.1 323 483.4 310 470.7 305.9 465.9 304.3 461.2 300.3 456.4 299 450.9 299 542.5ZM748.4 178.8 779 180.6 779 64 625.5 64 629.1 92.7 632 107.1 635 117.5 638.3 126.2 643.2 135.8 649.4 144.7 654.5 150.1 660.1 154.9 668.6 160.5 678.2 165.2 689.5 169.3 702.2 172.6 716.6 175.2 748.4 178.8Z"/>
<path fill="#B14C4C" d="M299 542.5 779 542.5 779 513.8 428.6 513.8 423.8 509 385.4 509 380.6 504.2 361.4 504.2 356.6 499.4 347 499.4 342.2 494.7 337.4 494.6 332.6 489.9 327.8 489.9 299 461.2 299 456.4 299 542.5ZM755 169.3 779 169.3 779 64 639.8 64 639.8 83.1 644.6 87.9 644.6 102.3 649.4 107.1 649.4 116.6 654.2 121.4 654.2 126.2 678.2 150.1 683 150.1 687.8 154.9 697.4 154.9 702.2 159.7 716.6 159.7 721.4 164.5 750.2 164.5 755 169.3Z"/>
<g fill="none" stroke-width="1.15" stroke-opacity="0.85" stroke-linejoin="round" shape-rendering="crispEdges">
<path stroke="#CF0000" d="M779 510.9 596.6 510.7 515 510 443 507.4 414.2 505.6 395 503.1 375.8 500.1 356.6 495.2 342.7 489.9 332.6 484.6 326.2 480.3 320.4 475.5 315.6 470.7 311.6 465.9 308.3 461.2 303.8 453.2 299 441.8M584 64 585.2 87.9 587.4 111.9 590.3 131 593.6 145.3 596.6 154.7 598.6 159.7 603.4 169.3 606.4 174.1 611 179.9 614.5 183.6 620 188.4 630.2 195 636.1 198 644.6 201.4 659 205.6 673.4 208.5 692.6 211.1 716.6 213.2 745.4 214.7 779 215.7"/>
<path stroke="#FF3000" d="M779 508 591.8 507.7 495.8 506.6 462.2 505.6 435.1 504.2 409.4 501.9 390.2 499.4 367.4 494.7 352.4 489.9 341.6 485.1 333.4 480.3 326.9 475.5 321.7 470.7 317.4 465.9 313.7 461.2 310.7 456.4 308.1 451.6 303.9 442 299 426.2M544.6 64 545.8 102.3 547.6 131 549.7 150.1 553.4 170.9 555.5 178.8 558.6 188.4 562.8 198 565.5 202.8 568.7 207.6 572.6 212.5 577.1 217.1 582.2 221.4 591.8 227.6 599.9 231.5 606.2 233.9 615.8 236.9 625.4 239.2 644.6 242.5 668.6 245 697.4 246.8 731 247.9 779 248.7"/>
<path stroke="#FF8F00" d="M779 505.3 587 505 495.8 503.9 457.4 502.5 428.6 500.7 404.6 498.2 382.9 494.7 364.1 489.9 351.8 485.3 347 483 341.8 480.3 334.5 475.5 328.6 470.7 323.8 465.9 318.2 458.8 313.7 451.6 308.6 440.3 305.9 432.4 303.3 422.9 299 400.9M512.8 64 513.6 107.1 515 140.6 517.4 169.3 520.2 188.4 522.2 198 524.7 207.6 530.3 221.9 534.2 229.2 539 236.1 543.3 241 548.6 245.9 555 250.6 563 255.2 574.9 260.2 592 265 615.8 269 644.6 271.8 678.2 273.5 721.4 274.5 779 275.1"/>
<path stroke="#FFDF00" d="M779 502.3 572.6 501.9 515 501.2 471.8 500 438.2 498.1 404.6 494.7 380.6 490.2 366.2 486.1 351.7 480.3 343.3 475.5 336.6 470.7 331.3 465.9 326.9 461.2 323 456 317.6 446.8 313.4 437.2 310.3 427.7 307.8 418.1 305.9 408.5 303.8 396 301.9 379.8 299 344M485.4 64 486.2 121.4 487.6 159.7 489.8 188.4 491.6 202.8 493.2 212.3 495.3 221.9 498 231.5 500.6 238.8 503.8 245.8 509.4 255.4 513.2 260.2 517.6 265 523.2 269.8 530.3 274.5 539 279.1 552.7 284.1 563 286.8 572.6 288.8 596.6 292.2 625.4 294.5 663.8 296.1 711.8 297 779 297.4"/>
<path stroke="#BFFF40" d="M779 499.1 625.4 498.9 543.8 498.3 486.2 497.1 439.4 494.7 419 492.6 399.8 489.9 378.2 485.1 364.1 480.3 356.6 476.9 347 471.3 340 465.9 332.6 458.3 327.6 451.6 322.4 442 318.5 432.4 314.4 418.1 312.3 408.5 309.3 389.4 307.7 375 304.7 332 303 279.3 302.1 202.8 301.8 64M460.5 64 461.1 126.2 462.3 169.3 464.4 202.8 467.4 226.7 469.2 236.3 471.8 247 474.5 255.4 478.6 265 484.1 274.5 487.8 279.3 492.1 284.1 497.6 288.9 504.4 293.7 510.2 296.9 515 299.1 526.1 303.3 534.2 305.5 545.3 308 558.2 310.2 572.6 311.9 601.4 314.2 644.6 315.9 697.4 316.7 779 317.1"/>
<path stroke="#70FF8F" d="M779 495.4 625.4 495.2 542.7 494.7 486.2 493.2 443 490.8 423.8 488.9 404.6 486.1 395 484.2 380.1 480.3 367.2 475.5 357.8 470.7 350.5 465.9 344.8 461.2 337.4 452.9 333.3 446.8 328.4 437.2 324.8 427.7 322.1 418.1 318.3 398.9 314.5 365.5 313.4 351.1 311.9 322.4 310.3 265 309.5 188.4 309.2 64M436.7 64 437.2 131 438.2 178.8 439.9 212.3 441.2 226.7 443 241.2 445.6 255.4 447.9 265 451.1 274.5 455.3 284.1 461.1 293.7 464.8 298.5 469.5 303.2 475.2 308 482.5 312.8 491 317 506.2 322.4 515 324.6 529.4 327.3 543.8 329.3 558.2 330.7 591.8 332.8 635 334 692.6 334.7 779 334.9"/>
<path stroke="#10FFEF" d="M779 491.3 625.4 491 543.8 490.4 491 489 447.8 486.5 428.6 484.5 409.4 481.5 399.8 479.6 385.4 475.6 372.8 470.7 366.2 467.3 356.9 461.2 351.8 456.6 347 451.4 340.7 442 336.2 432.4 332.9 422.9 330.6 413.3 328 398.9 324.9 370.2 322.3 327.2 320.4 265 319.6 188.4 319.2 64M412.3 64 412.7 140.6 413.5 188.4 415.2 226.7 418.1 255.4 420.5 269.8 422.7 279.3 425.6 288.9 428.6 296.6 433.4 305.8 438.2 312.8 442.4 317.6 447.8 322.6 454 327.2 462.4 332 471.8 336 481.4 339.1 491 341.5 500.6 343.4 515 345.5 529.4 347.1 563 349.3 611 350.7 673.4 351.4 779 351.6"/>
<path stroke="#00BFFF" d="M779 486.4 635 486.2 553.4 485.5 500.6 484.2 457.4 481.7 442 480.3 419 476.9 409.4 475 395 471.1 381.7 465.9 375.8 462.8 366.2 456.4 361.4 452 356.9 446.8 353.6 442 350.9 437.2 346.9 427.7 344.3 418.1 342.4 408.5 340.5 389.4 339.4 360.7 337.4 254.9 336.7 174.1 336.3 64M382.3 64 382.5 150.1 383.2 202.8 384.9 241 387.6 269.8 389.1 279.3 392.1 293.7 395.1 303.2 398.9 312.8 404.1 322.4 407.4 327.2 411.5 332 419 338.9 423.8 342.4 433.4 347.9 443 352 452.6 355.1 462.2 357.5 476.6 360.3 491 362.2 505.4 363.6 543.8 365.8 591.8 367 659 367.6 779 367.7"/>
<path stroke="#0060FF" d="M779 480.6 620.6 480.2 529.4 478.8 495.8 477.5 467 475.7 447.8 473.6 428.6 470.7 409.4 466.1 399.8 462.6 396.1 461.2 387.1 456.4 380.3 451.6 375.3 446.8 371.4 442 368.4 437.2 366.1 432.4 363.4 422.9 362.6 418.1 362.3 408.5 363.3 398.9 364.3 394.2 366.2 387.9 370.5 379.8 375.8 374.6 380.6 372.2 385.4 371.2 390.2 370.9 399.8 371.6 433.4 376.7 457.4 379.3 481.4 381 510.2 382.3 548.6 383.1 596.6 383.6 779 383.8"/>
<path stroke="#0000FF" d="M779 472.6 639.8 472.3 558.2 471.3 534.8 470.7 510.2 469.6 486.2 467.9 465.4 465.9 438.1 461.2 422.3 456.4 412 451.6 404.9 446.8 400 442 397 437.2 395.2 432.4 394.7 427.7 395.6 422.9 398 418.1 402.6 413.3 409.4 409.3 414.2 407.5 423.8 405.1 433.2 403.7 443 402.9 467 401.9 510.2 401.4 779 401"/>
<path stroke="#0000AF" d="M779 459.5 630.2 458.7 582.2 457.7 543.8 456.3 519.8 454.1 500.6 451.8 486.2 448.5 480 446.8 472.1 442 471.7 437.2 480 432.4 495.8 429.1 510.2 427.2 539 425.3 572.6 424.1 620.6 423.3 779 422.6"/>
<path stroke="#800000" d="M779 513.8 428.6 513.8 423.8 509 385.4 509 380.6 504.2 361.4 504.2 356.6 499.4 347 499.4 342.2 494.7 337.4 494.6 332.6 489.9 327.8 489.9 299 461.2 299 456.4M639.8 64 639.8 83.1 644.6 87.9 644.6 102.3 649.4 107.1 649.4 116.6 654.2 121.4 654.2 126.2 678.2 150.1 683 150.1 687.8 154.9 697.4 154.9 702.2 159.7 716.6 159.7 721.4 164.5 750.2 164.5 755 169.3 779 169.3"/>
</g>
<g stroke="#000" stroke-opacity="0.05" stroke-width="1">
<path d="M419.5 64V542.5M299 422.5H779"/>
<path d="M539.5 64V542.5M299 303.5H779"/>
<path d="M659.5 64V542.5M299 183.5H779"/>
</g>
<path fill="none" stroke="#000" stroke-width="6.2" stroke-linejoin="round" stroke-linecap="round" d="M495.5 439C497.4 439.8 503.0 443.3 507 443.6C511.0 443.9 515.1 441.5 519.25 440.9C523.4 440.3 528.2 440.1 531.75 440C535.3 439.9 536.3 439.8 540.5 440.3C544.7 440.8 552.0 442.2 556.75 442.75C561.5 443.3 564.5 443.6 569.25 443.4C574.0 443.2 580.8 441.9 585.5 441.3C590.2 440.7 592.4 439.9 597.5 439.6C602.6 439.3 610.0 439.2 616.25 439.6C622.5 440.0 629.4 441.4 635 442.1C640.6 442.8 644.8 443.9 650 444C655.2 444.1 660.8 443.2 666.25 442.5C671.7 441.8 678.1 440.4 682.5 440C686.9 439.6 687.7 439.6 692.5 440C697.3 440.4 704.0 441.4 711.25 442.1C718.5 442.8 729.0 444.2 736.25 444.4C743.5 444.6 748.1 443.8 755 443.1C761.9 442.4 771.7 440.9 777.5 440C783.3 439.1 787.9 438.3 790 438"/>
</g>
<rect x="299.5" y="64.5" width="479" height="477.5" fill="none" stroke="#000" stroke-opacity="0.22"/>
<g stroke="#262626" stroke-width="1" stroke-opacity="0.3">
<path d="M419.5 542.5V537.5"/>
<path d="M299 422.5H304"/>
<path d="M539.5 542.5V537.5"/>
<path d="M299 303.5H304"/>
<path d="M659.5 542.5V537.5"/>
<path d="M299 183.5H304"/>
</g>
</svg>
<div class="t" style="left:269.00px;width:60px;text-align:center;top:549.39px;font-size:11px;color:#262626">0.5</div>
<div class="t" style="left:233.90px;width:60px;text-align:right;top:537.79px;font-size:11px;color:#262626">0.5</div>
<div class="t" style="left:389.00px;width:60px;text-align:center;top:549.39px;font-size:11px;color:#262626">1</div>
<div class="t" style="left:233.90px;width:60px;text-align:right;top:418.16px;font-size:11px;color:#262626">1</div>
<div class="t" style="left:509.00px;width:60px;text-align:center;top:549.39px;font-size:11px;color:#262626">1.5</div>
<div class="t" style="left:233.90px;width:60px;text-align:right;top:298.54px;font-size:11px;color:#262626">1.5</div>
<div class="t" style="left:629.00px;width:60px;text-align:center;top:549.39px;font-size:11px;color:#262626">2</div>
<div class="t" style="left:233.90px;width:60px;text-align:right;top:178.91px;font-size:11px;color:#262626">2</div>
<div class="t" style="left:749.00px;width:60px;text-align:center;top:549.39px;font-size:11px;color:#262626">2.5</div>
<div class="t" style="left:233.90px;width:60px;text-align:right;top:59.29px;font-size:11px;color:#262626">2.5</div>
<div class="t" style="left:439px;width:200px;text-align:center;top:562.38px;font-size:14.5px;line-height:16px;font-family:'Liberation Serif',serif;color:#333">A-B bond distance (Å)</div>
<div class="t" style="left:164.5px;width:200px;text-align:center;top:296.5px;font-size:14.5px;line-height:16px;font-family:'Liberation Serif',serif;color:#333;transform:rotate(-90deg);transform-origin:100px 8px">B-C bond distance (Å)</div>
</body></html>
